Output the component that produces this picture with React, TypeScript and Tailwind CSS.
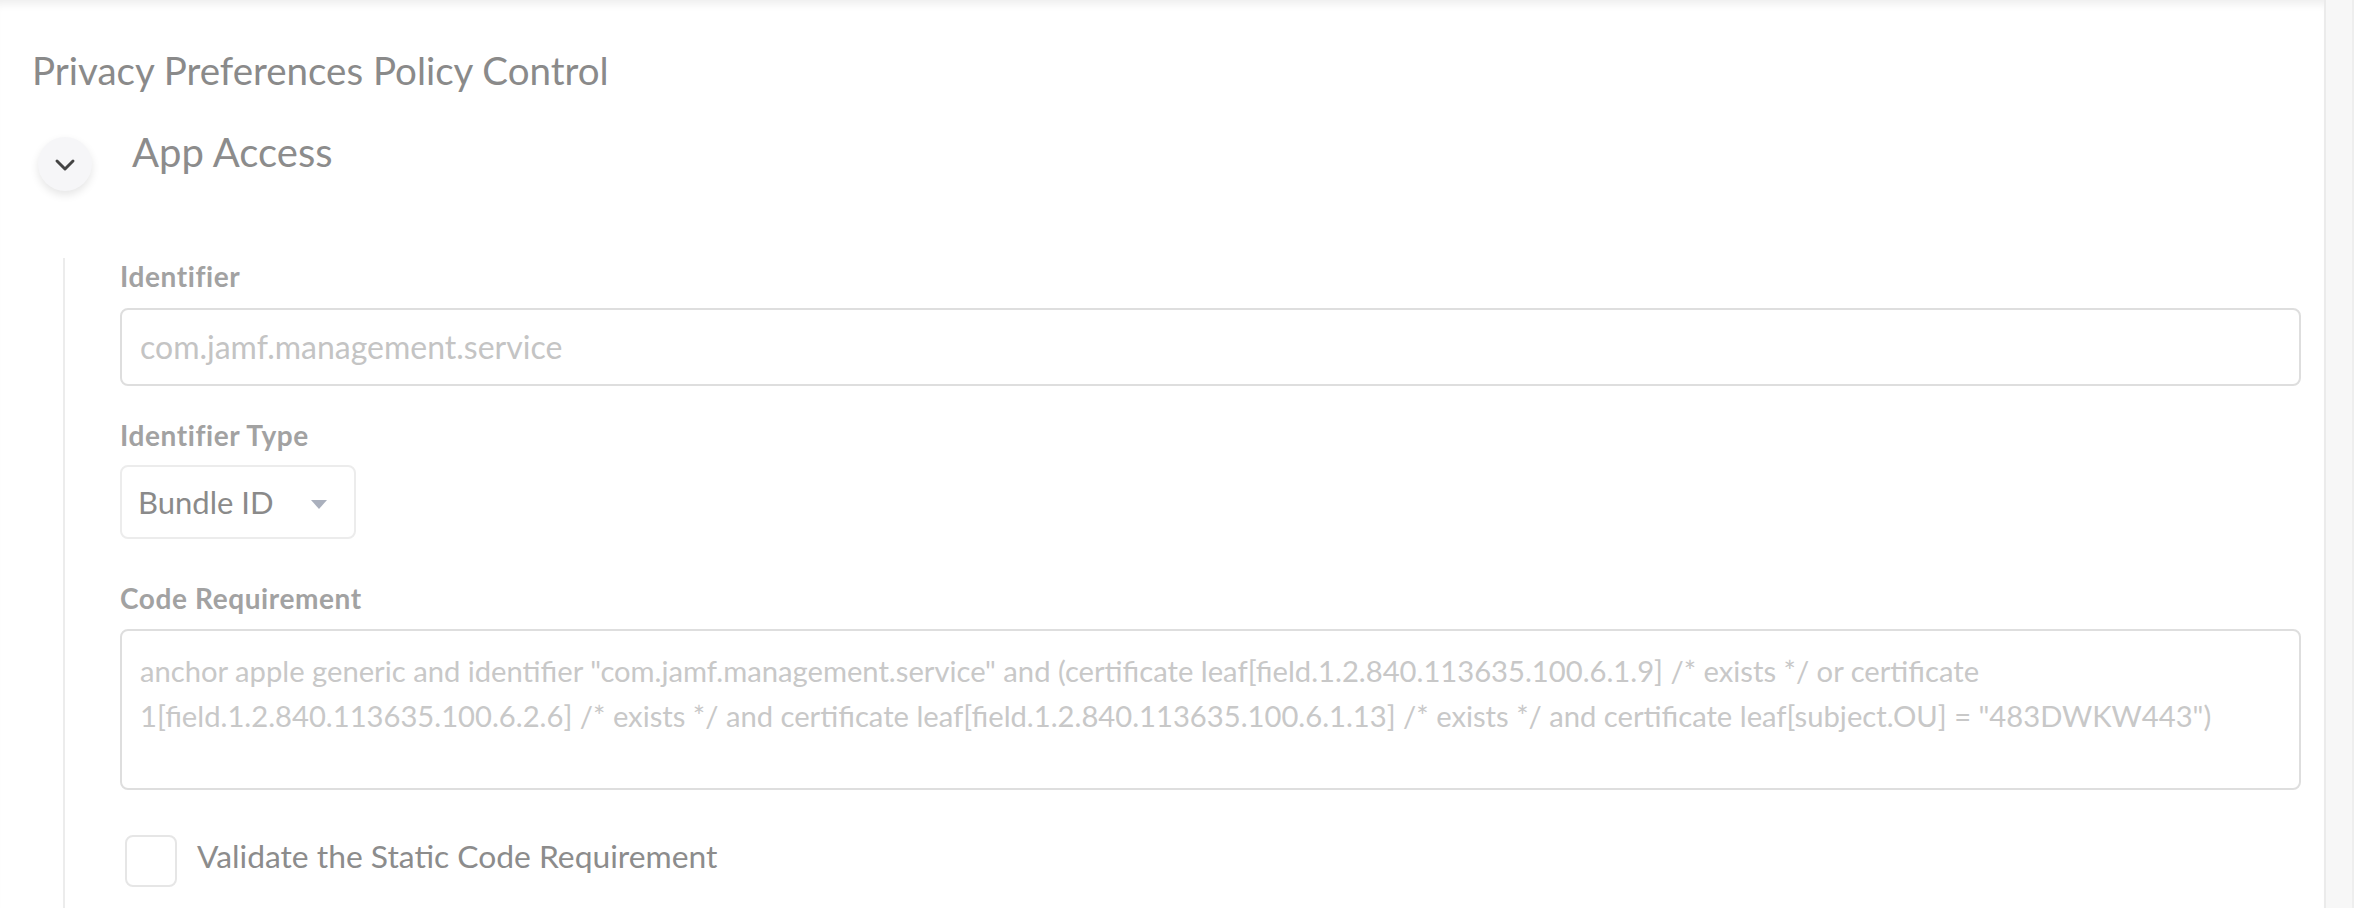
import { ChevronDown } from "lucide-react"

const codeLines = [
  'anchor apple generic and identifier "com.jamf.management.service" and (certificate leaf[field.1.2.840.113635.100.6.1.9] /* exists */ or certificate',
  '1[field.1.2.840.113635.100.6.2.6] /* exists */ and certificate leaf[field.1.2.840.113635.100.6.1.13] /* exists */ and certificate leaf[subject.OU] = "483DWKW443")',
]

function FieldLabel({ children }: { children: string }) {
  return <div className="text-[28px] leading-[32px] font-bold tracking-[0.6px] text-[#a2a2a2]">{children}</div>
}

export default function App() {
  return (
    <div className="flex h-[908px] w-full overflow-hidden bg-white font-['Lato',sans-serif]">
      <main className="flex-1 pl-[32px] pr-[23px] pt-[48px] shadow-[inset_0_10px_8px_-6px_rgba(0,0,0,0.07)]">
        <h1 className="text-[38.5px] leading-[44px] font-normal text-[#8a8a8a]">Privacy Preferences Policy Control</h1>

        <div className="mt-[38px] flex items-start">
          <button className="ml-[6px] mt-[7px] flex h-[54px] w-[54px] items-center justify-center rounded-full bg-[#f6f6f8] shadow-[0_4px_8px_rgba(0,0,0,0.10)]">
            <ChevronDown size={32} strokeWidth={2.2} className="mt-[2px] text-[#444]" />
          </button>
          <h2 className="ml-[40px] text-[40px] leading-[44px] font-normal text-[#8c8c8c]">App Access</h2>
        </div>

        <section className="ml-[31px] mt-[67px] h-[700px] border-l-2 border-[#ececec] pl-[55px] pt-[2px]">
          <FieldLabel>Identifier</FieldLabel>
          <div className="mt-[16px] flex h-[78px] items-center rounded-[8px] border-2 border-[#dedede] pl-[18px] text-[32px] text-[#c4c4c4]">
            com.jamf.management.service
          </div>

          <div className="mt-[33px]">
            <FieldLabel>Identifier Type</FieldLabel>
          </div>
          <div className="mt-[14px] flex h-[74px] w-[236px] items-center rounded-[8px] border-2 border-[#ececec] pl-[16px] text-[31px] text-[#8a8a8a]">
            <span>Bundle ID</span>
            <svg width="18" height="11" viewBox="0 0 18 11" className="ml-[36px] mt-[4px]">
              <polygon points="1,1 17,1 9,10" fill="#aab0bd" />
            </svg>
          </div>

          <div className="mt-[43px]">
            <FieldLabel>Code Requirement</FieldLabel>
          </div>
          <div className="mt-[15px] h-[161px] rounded-[8px] border-2 border-[#dedede] pl-[18px] pt-[17px] text-[29.2px] leading-[45px] text-[#c8c8c8]">
            {codeLines.map((line) => (
              <div key={line} className="whitespace-nowrap">{line}</div>
            ))}
          </div>

          <label className="mt-[45px] flex items-center gap-[20px] pl-[5px]">
            <span className="h-[52px] w-[52px] rounded-[8px] border-2 border-[#e6e6e6] bg-white" />
            <span className="-mt-[8px] text-[31.8px] text-[#8c8c8c]">Validate the Static Code Requirement</span>
          </label>
        </section>
      </main>
      <aside className="w-[30px] border-l-2 border-[#ebebeb] bg-[#f7f7f7]">
        <div className="ml-auto h-full w-[2px] bg-[#eeeeee]" />
      </aside>
    </div>
  )
}
